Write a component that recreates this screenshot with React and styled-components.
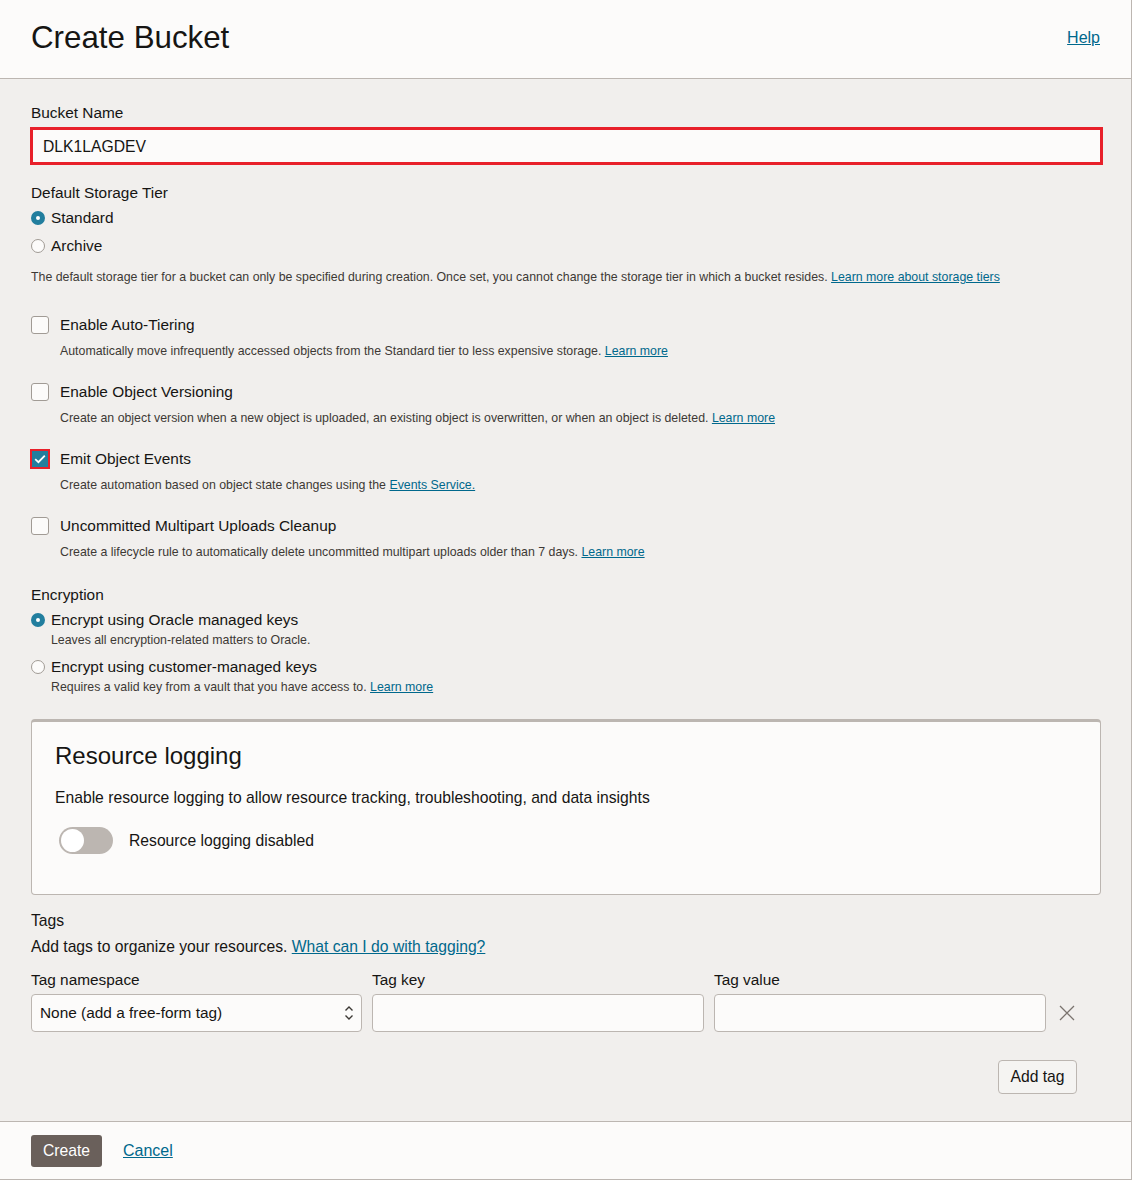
import React from "react"
import styled, { createGlobalStyle } from "styled-components"

const GlobalStyle = createGlobalStyle`
  html, body { margin: 0; padding: 0; }
  body {
    font-family: "Liberation Sans", Arial, sans-serif;
    color: #161513;
    background: #f1efed;
  }
`

const Page = styled.div`
  width: 1131px;
  height: 1180px;
  border-right: 1px solid #bcb6b1;
  background: #f1efed;
  display: flex;
  flex-direction: column;
`

const Header = styled.header`
  height: 79px;
  box-sizing: border-box;
  flex: none;
  background: #fcfbfa;
  border-bottom: 1px solid #bcb6b1;
  display: flex;
  align-items: center;
  justify-content: space-between;
  padding: 0 31px 2px 31px;
`

const Title = styled.h1`
  margin: 0;
  font-size: 31.3px;
  font-weight: normal;
  color: #161513;
`

const Link = styled.a`
  color: #00688c;
  text-decoration: underline;
  font-size: ${(p) => p.size || "inherit"};
  cursor: pointer;
`

const Body = styled.main`
  flex: 1;
  padding: 25px 28px 0 31px;
`

const Label = styled.div`
  font-size: 15.4px;
  line-height: 18px;
  margin-top: ${(p) => p.top || 0}px;
`

const NameInput = styled.div`
  margin-top: 5px;
  height: 38px;
  box-sizing: border-box;
  width: 1073px;
  margin-left: -1px;
  border: 3px solid #e8202a;
  background: #fcfbfa;
  display: flex;
  align-items: center;
  padding: 1px 0 0 10px;
  font-size: 15.7px;
`

const RadioRow = styled.label`
  display: flex;
  align-items: center;
  height: ${(p) => p.h || 28}px;
  margin-top: ${(p) => p.top || 0}px;
  font-size: 15.4px;
  gap: 6px;
`

const RadioDot = styled.span`
  width: 14px;
  height: 14px;
  box-sizing: border-box;
  border-radius: 50%;
  flex: none;
  border: ${(p) => (p.checked ? "5px solid #227e9e" : "1px solid #a19b95")};
  background: ${(p) => (p.checked ? "#fff" : "#fcfbfa")};
`

const Note = styled.div`
  font-size: 12.35px;
  line-height: ${(p) => p.lh || 16}px;
  color: #3d3935;
  margin-top: ${(p) => p.top || 0}px;
  margin-left: ${(p) => p.indent || 0}px;
`

const OptionGroup = styled.div`
  margin-top: ${(p) => p.top}px;
`

const CheckRow = styled.label`
  display: flex;
  align-items: center;
  height: 20px;
  font-size: 15.4px;
  gap: 11px;
`

const Box = styled.span`
  flex: none;
  display: flex;
  align-items: center;
  justify-content: center;
  box-sizing: border-box;
  width: ${(p) => (p.checked ? 20 : 18)}px;
  height: ${(p) => (p.checked ? 20 : 18)}px;
  margin: ${(p) => (p.checked ? "0 -1px" : "0")};
  border-radius: ${(p) => (p.checked ? 0 : 3)}px;
  border: ${(p) => (p.checked ? "2px solid #e8202a" : "1px solid #a19b95")};
  background: ${(p) => (p.checked ? "#227e9e" : "#fcfbfa")};
`

const Panel = styled.section`
  margin-top: 25px;
  width: 1070px;
  height: 176px;
  box-sizing: border-box;
  background: #fcfbfa;
  border: 1px solid #bcb6b1;
  border-top: 3px solid #bcb6b1;
  border-radius: 4px;
  padding: 20px 23px 0 23px;
`

const PanelTitle = styled.h2`
  margin: 0;
  font-size: 24px;
  line-height: 28px;
  font-weight: normal;
`

const Text = styled.div`
  font-size: 15.7px;
  line-height: 20px;
  margin-top: ${(p) => p.top || 0}px;
`

const ToggleRow = styled.div`
  margin-top: 19px;
  margin-left: 4px;
  display: flex;
  align-items: center;
  gap: 16px;
  font-size: 15.7px;
`

const Toggle = styled.span`
  width: 54px;
  height: 27px;
  border-radius: 14px;
  background: #bcb6b1;
  display: flex;
  align-items: center;
  padding-left: 2px;
  box-sizing: border-box;

  &::before {
    content: "";
    width: 23px;
    height: 23px;
    border-radius: 50%;
    background: #fff;
  }
`

const TagGrid = styled.div`
  margin-top: 14px;
  display: grid;
  grid-template-columns: 331px 332px 332px 31px;
  column-gap: 10px;
  row-gap: 5px;
  width: 1046px;
`

const TagLabel = styled.div`
  font-size: 15.4px;
  line-height: 18px;
`

const Field = styled.div`
  height: 38px;
  box-sizing: border-box;
  border: 1px solid #bcb6b1;
  border-radius: 4px;
  background: #fcfbfa;
  display: flex;
  align-items: center;
  justify-content: space-between;
  padding: 0 6px 0 8px;
  font-size: 15.4px;
`

const RemoveCell = styled.div`
  display: flex;
  align-items: center;
  padding-left: 3px;
`

const Actions = styled.div`
  display: flex;
  justify-content: flex-end;
  width: 1046px;
  margin-top: 28px;
`

const GhostButton = styled.button`
  height: 34px;
  width: 79px;
  border: 1px solid #bcb6b1;
  border-radius: 4px;
  background: #f5f4f2;
  font-family: inherit;
  font-size: 15.7px;
  color: #161513;
`

const Footer = styled.footer`
  height: 59px;
  flex: none;
  box-sizing: border-box;
  background: #fcfbfa;
  border-top: 1px solid #bcb6b1;
  border-bottom: 1px solid #bcb6b1;
  display: flex;
  align-items: center;
  gap: 21px;
  padding: 0 31px;
`

const PrimaryButton = styled.button`
  height: 32px;
  width: 71px;
  border: none;
  border-radius: 3px;
  background: #6a605b;
  color: #fff;
  font-family: inherit;
  font-size: 15.7px;
`

const Check = () => (
  <svg width="14" height="14" viewBox="0 0 14 14">
    <path d="M2.2 7.2 L5.4 10.2 L11.8 3.6" fill="none" stroke="#fff" strokeWidth="1.8" />
  </svg>
)

const Chevrons = () => (
  <svg width="12" height="18" viewBox="0 0 12 18">
    <path d="M2.5 6.5 L6 3 L9.5 6.5 M2.5 11.5 L6 15 L9.5 11.5" fill="none" stroke="#3d3935" strokeWidth="1.4" />
  </svg>
)

const Close = () => (
  <svg width="16" height="16" viewBox="0 0 16 16">
    <path d="M1 1 L15 15 M15 1 L1 15" fill="none" stroke="#7a736e" strokeWidth="1.3" />
  </svg>
)

const options = [
  {
    label: "Enable Auto-Tiering",
    text: "Automatically move infrequently accessed objects from the Standard tier to less expensive storage.",
    link: "Learn more",
  },
  {
    label: "Enable Object Versioning",
    text: "Create an object version when a new object is uploaded, an existing object is overwritten, or when an object is deleted.",
    link: "Learn more",
  },
  {
    label: "Emit Object Events",
    text: "Create automation based on object state changes using the",
    link: "Events Service.",
    checked: true,
  },
  {
    label: "Uncommitted Multipart Uploads Cleanup",
    text: "Create a lifecycle rule to automatically delete uncommitted multipart uploads older than 7 days.",
    link: "Learn more",
  },
]

export default function App() {
  return (
    <Page>
      <GlobalStyle />
      <Header>
        <Title>Create Bucket</Title>
        <Link size="16px">Help</Link>
      </Header>
      <Body>
        <Label>Bucket Name</Label>
        <NameInput>DLK1LAGDEV</NameInput>

        <Label top={19}>Default Storage Tier</Label>
        <RadioRow top={2}>
          <RadioDot checked />
          Standard
        </RadioRow>
        <RadioRow>
          <RadioDot />
          Archive
        </RadioRow>
        <Note top={9}>
          The default storage tier for a bucket can only be specified during creation. Once set, you
          cannot change the storage tier in which a bucket resides.{" "}
          <Link>Learn more about storage tiers</Link>
        </Note>

        {options.map((o, i) => (
          <OptionGroup key={o.label} top={i === 0 ? 30 : 23}>
            <CheckRow>
              <Box checked={o.checked}>{o.checked && <Check />}</Box>
              {o.label}
            </CheckRow>
            <Note top={8} indent={29}>
              {o.text} <Link>{o.link}</Link>
            </Note>
          </OptionGroup>
        ))}

        <Label top={26}>Encryption</Label>
        <RadioRow h={20} top={6}>
          <RadioDot checked />
          Encrypt using Oracle managed keys
        </RadioRow>
        <Note lh={14} top={3} indent={20}>
          Leaves all encryption-related matters to Oracle.
        </Note>
        <RadioRow h={20} top={10}>
          <RadioDot />
          Encrypt using customer-managed keys
        </RadioRow>
        <Note lh={14} top={3} indent={20}>
          Requires a valid key from a vault that you have access to. <Link>Learn more</Link>
        </Note>

        <Panel>
          <PanelTitle>Resource logging</PanelTitle>
          <Text top={18}>
            Enable resource logging to allow resource tracking, troubleshooting, and data insights
          </Text>
          <ToggleRow>
            <Toggle />
            Resource logging disabled
          </ToggleRow>
        </Panel>

        <Text top={16}>Tags</Text>
        <Text top={6}>
          Add tags to organize your resources. <Link>What can I do with tagging?</Link>
        </Text>

        <TagGrid>
          <TagLabel>Tag namespace</TagLabel>
          <TagLabel>Tag key</TagLabel>
          <TagLabel>Tag value</TagLabel>
          <div />
          <Field>
            None (add a free-form tag)
            <Chevrons />
          </Field>
          <Field />
          <Field />
          <RemoveCell>
            <Close />
          </RemoveCell>
        </TagGrid>

        <Actions>
          <GhostButton>Add tag</GhostButton>
        </Actions>
      </Body>
      <Footer>
        <PrimaryButton>Create</PrimaryButton>
        <Link size="16px">Cancel</Link>
      </Footer>
    </Page>
  )
}
